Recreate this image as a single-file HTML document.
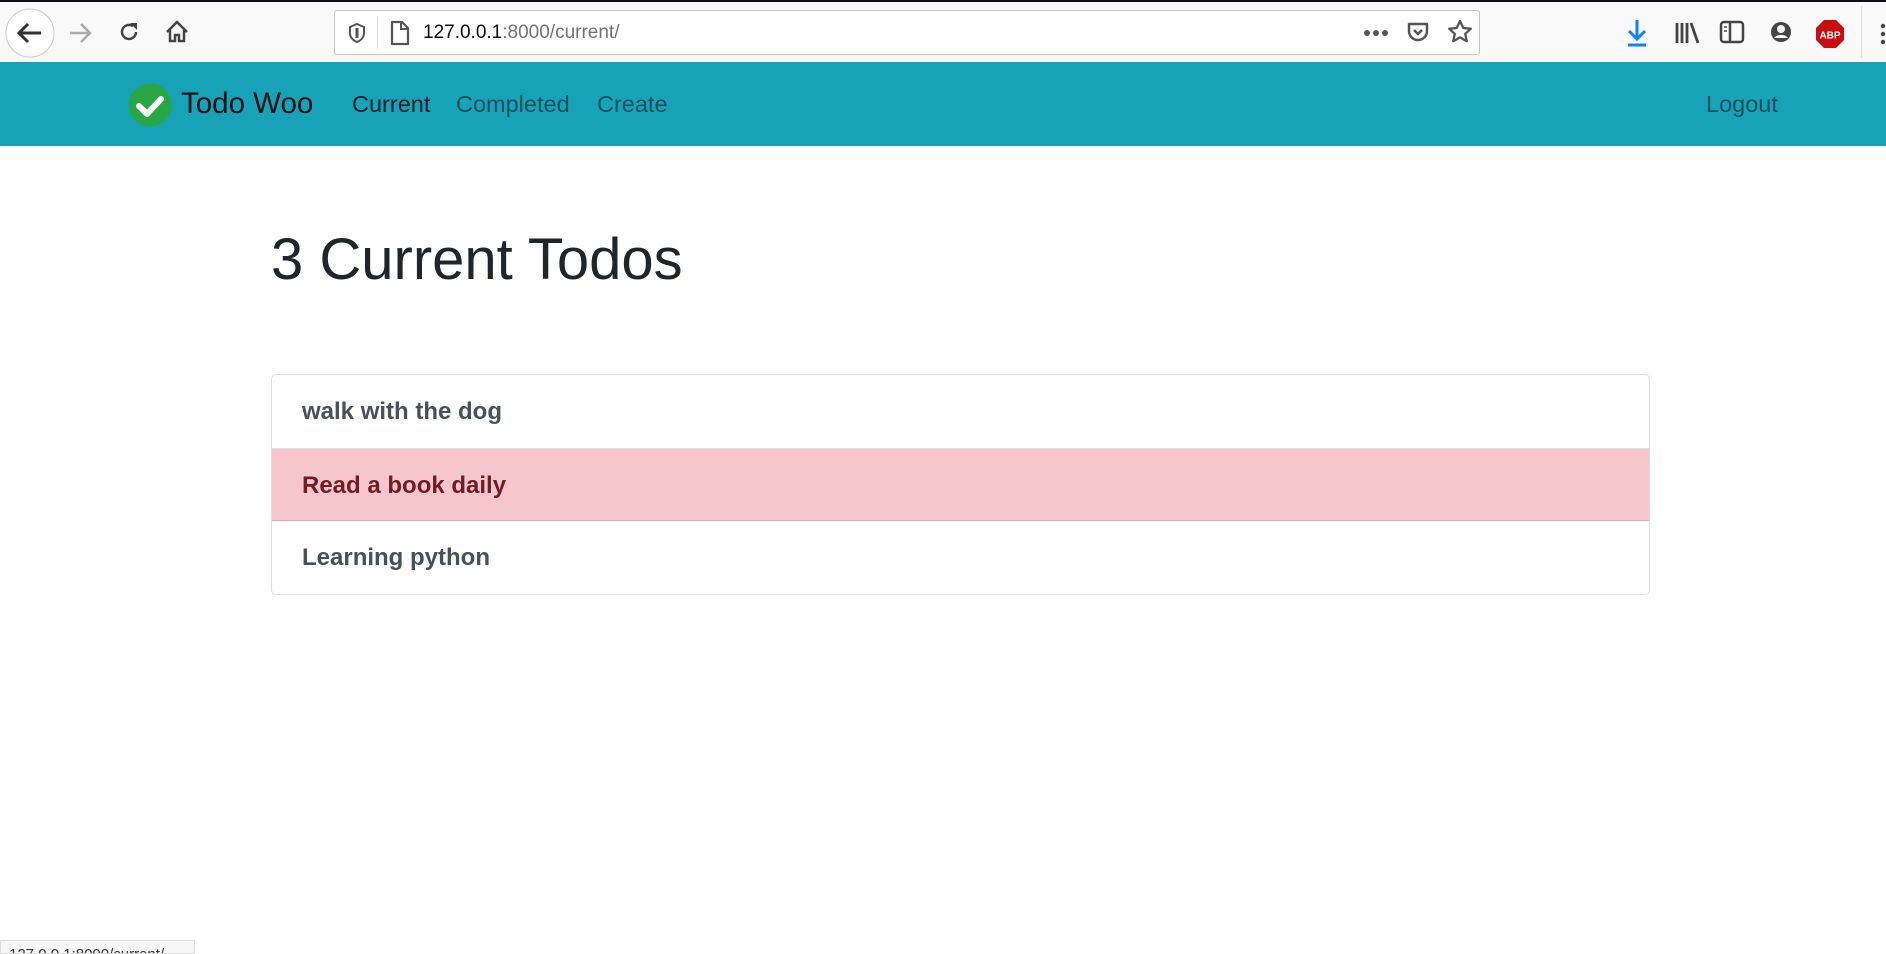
<!DOCTYPE html>
<html><head><meta charset="utf-8"><style>
*{margin:0;padding:0;box-sizing:border-box}
body{width:1886px;height:952px;overflow:hidden;background:#fff;font-family:"Liberation Sans",sans-serif;position:relative}
.top{position:absolute;left:0;top:0;width:1886px;height:62px;background:#f9f9fa;border-top:2px solid #0c0c1d}
.ic{position:absolute}
.url{position:absolute;left:334px;top:8px;width:1146px;height:45px;background:#fff;border:1px solid #c8c8c8;border-radius:3px}
.url .t{position:absolute;left:88px;top:11px;font-size:19px;color:#0c0c0d}
.url .t span{color:#737373}
.nav{position:absolute;left:0;top:62px;width:1886px;height:84px;background:#17a2b8}
.nav a{position:absolute;top:29px;font-size:23.5px;color:rgba(0,0,0,.5);text-decoration:none}
h1{position:absolute;left:271px;top:231px;font-size:58px;font-weight:400;color:#212529;line-height:1}
.list{position:absolute;left:271px;top:374px;width:1379px;border:1px solid #dfdfdf;border-radius:5px;overflow:hidden}
.item{height:73px;line-height:73px;padding-left:30px;font-weight:bold;font-size:24px;color:#495057}
.item+.item{border-top:1px solid #dfdfdf}
.red{background:#f5c6cb;color:#721c24;border-bottom:1px solid #e9a8b0}
.status{position:absolute;left:0;top:940px;width:195px;height:14px;background:#f7f7f7;border:1px solid #ddd;font-size:15px;color:#333;overflow:hidden;line-height:28px;padding-left:8px}
</style></head><body>
<div class="top">
<svg class="ic" style="left:5px;top:6px" width="50" height="50"><circle cx="25" cy="25" r="24" fill="#fff" stroke="#ccc"/><path d="M36 25H14M23 16l-9 9 9 9" stroke="#333" stroke-width="3" fill="none"/></svg>
<svg class="ic" style="left:68px;top:19px" width="26" height="24"><path d="M2 12h20M13 3l9 9-9 9" stroke="#aaa" stroke-width="2.5" fill="none"/></svg>
<svg class="ic" style="left:117px;top:18px" width="24" height="24"><path d="M19 12a7 7 0 1 1-3-5.8" stroke="#444" stroke-width="2.5" fill="none"/><path d="M13 3h7v7z" fill="#444"/></svg>
<svg class="ic" style="left:164px;top:17px" width="26" height="26"><path d="M3 13L13 3l10 10M6 11v11h5v-6h4v6h5V11" stroke="#444" stroke-width="2.5" fill="none"/></svg>
<div class="url">
<svg class="ic" style="left:12px;top:11px" width="20" height="22"><path d="M10 2l7 3v6c0 5-4 8-7 9-3-1-7-4-7-9V5z" stroke="#555" stroke-width="2" fill="none"/><path d="M10 6v10" stroke="#555" stroke-width="3"/></svg>
<div style="position:absolute;left:42px;top:6px;width:1px;height:32px;background:#ddd"></div>
<svg class="ic" style="left:54px;top:9px" width="22" height="26"><path d="M3 2h10l6 6v16H3z" stroke="#555" stroke-width="2.2" fill="none" stroke-linejoin="round"/><path d="M12 2v7h7" stroke="#555" stroke-width="2" fill="none"/></svg>
<div class="t">127.0.0.1<span>:8000/current/</span></div>
<svg class="ic" style="left:1028px;top:18px" width="28" height="8"><circle cx="4" cy="4" r="3" fill="#555"/><circle cx="13" cy="4" r="3" fill="#555"/><circle cx="22" cy="4" r="3" fill="#555"/></svg>
<svg class="ic" style="left:1071px;top:9px" width="24" height="24"><path d="M3 4h18v7a9 9 0 0 1-18 0z" stroke="#555" stroke-width="2.5" fill="none" stroke-linejoin="round"/><path d="M8 10l4 4 4-4" stroke="#555" stroke-width="2.5" fill="none"/></svg>
<svg class="ic" style="left:1112px;top:8px" width="26" height="26"><path d="M13 2l3.3 7 7.5.8-5.6 5 1.6 7.4L13 18.4l-6.8 3.8 1.6-7.4-5.6-5L9.7 9z" stroke="#555" stroke-width="2.3" fill="none" stroke-linejoin="round"/></svg>
</div>
<svg class="ic" style="left:1625px;top:16px" width="24" height="30"><path d="M12 2v18M4 13l8 8 8-8" stroke="#0a84ff" stroke-width="3" fill="none"/><path d="M3 27h18" stroke="#0a84ff" stroke-width="3"/></svg>
<svg class="ic" style="left:1674px;top:18px" width="28" height="26"><path d="M3 3v20M8 3v20M13 3v20M17 3l7 20" stroke="#444" stroke-width="2.8"/></svg>
<svg class="ic" style="left:1719px;top:18px" width="28" height="26"><rect x="2" y="2" width="22" height="20" rx="3" stroke="#444" stroke-width="2.5" fill="none"/><path d="M11 2v20" stroke="#444" stroke-width="2.5"/><path d="M5 7h3M5 11h3" stroke="#444" stroke-width="1.5"/></svg>
<svg class="ic" style="left:1768px;top:18px" width="28" height="28"><circle cx="13" cy="12" r="10" fill="#444"/><circle cx="13" cy="9" r="4" fill="#f9f9fa"/><path d="M6 18a8 6 0 0 1 14 0" fill="#f9f9fa"/></svg>
<svg class="ic" style="left:1815px;top:17px" width="30" height="30"><polygon points="9,1 21,1 29,9 29,21 21,29 9,29 1,21 1,9" fill="#c70d0d"/><text x="15" y="19.5" font-size="10" font-weight="bold" fill="#fff" text-anchor="middle" font-family="Liberation Sans">ABP</text></svg>
<div style="position:absolute;left:1861px;top:4px;width:1px;height:52px;background:#ddd"></div>
<svg class="ic" style="left:1880px;top:20px" width="6" height="24"><circle cx="3" cy="4" r="2.2" fill="#444"/><circle cx="3" cy="12" r="2.2" fill="#444"/><circle cx="3" cy="20" r="2.2" fill="#444"/></svg>
</div>
<div class="nav">
<svg class="ic" style="left:128px;top:21px" width="44" height="44"><circle cx="22" cy="22" r="21.5" fill="#28a745"/><path d="M11 23l8 8 14-15" stroke="#fff" stroke-width="6" fill="none" stroke-linecap="round" stroke-linejoin="round"/></svg>
<a style="left:181px;top:25px;font-size:29.5px;color:rgba(0,0,0,.9)">Todo Woo</a>
<a style="left:352px;color:rgba(0,0,0,.8)">Current</a>
<a style="left:456px">Completed</a>
<a style="left:597px">Create</a>
<a style="left:1706px">Logout</a>
</div>
<h1>3 Current Todos</h1>
<div class="list">
<div class="item">walk with the dog</div>
<div class="item red">Read a book daily</div>
<div class="item" style="border-top:none">Learning python</div>
</div>
<div class="status">127.0.0.1:8000/current/</div>
</body></html>
